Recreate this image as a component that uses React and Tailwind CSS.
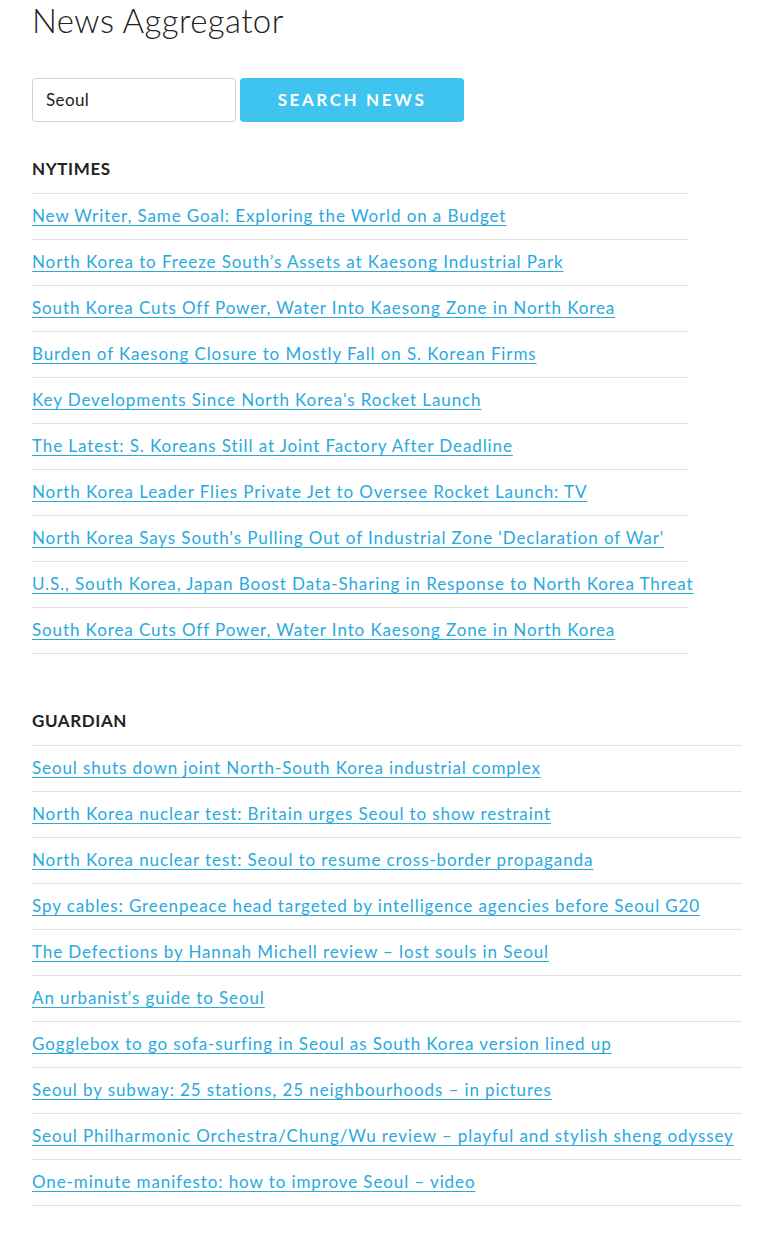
import React from "react";

const nytimes = [
  "New Writer, Same Goal: Exploring the World on a Budget",
  "North Korea to Freeze South\u2019s Assets at Kaesong Industrial Park",
  "South Korea Cuts Off Power, Water Into Kaesong Zone in North Korea",
  "Burden of Kaesong Closure to Mostly Fall on S. Korean Firms",
  "Key Developments Since North Korea's Rocket Launch",
  "The Latest: S. Koreans Still at Joint Factory After Deadline",
  "North Korea Leader Flies Private Jet to Oversee Rocket Launch: TV",
  "North Korea Says South's Pulling Out of Industrial Zone 'Declaration of War'",
  "U.S., South Korea, Japan Boost Data-Sharing in Response to North Korea Threat",
  "South Korea Cuts Off Power, Water Into Kaesong Zone in North Korea",
];

const guardian = [
  "Seoul shuts down joint North-South Korea industrial complex",
  "North Korea nuclear test: Britain urges Seoul to show restraint",
  "North Korea nuclear test: Seoul to resume cross-border propaganda",
  "Spy cables: Greenpeace head targeted by intelligence agencies before Seoul G20",
  "The Defections by Hannah Michell review \u2013 lost souls in Seoul",
  "An urbanist's guide to Seoul",
  "Gogglebox to go sofa-surfing in Seoul as South Korea version lined up",
  "Seoul by subway: 25 stations, 25 neighbourhoods \u2013 in pictures",
  "Seoul Philharmonic Orchestra/Chung/Wu review \u2013 playful and stylish sheng odyssey",
  "One-minute manifesto: how to improve Seoul \u2013 video",
];

function Section({ title, items, width }) {
  return (
    <div className={width}>
      <div className="h-[47px] flex items-center pb-[2px] border-b border-[#e1e1e1] text-[17px] font-bold text-[#222] tracking-[0.6px]">
        {title}
      </div>
      {items.map((t, i) => (
        <div
          key={i}
          className="h-[46px] flex items-center pb-[2px] border-b border-[#e1e1e1] whitespace-nowrap"
        >
          <a
            href="#"
            className="text-[17px] text-[#2aa9dd] tracking-[0.9px] underline underline-offset-[3px] decoration-1"
          >
            {t}
          </a>
        </div>
      ))}
    </div>
  );
}

export default function App() {
  return (
    <div
      className="bg-white min-h-[1236px] pl-8 text-[#222]"
      style={{ fontFamily: "Lato, 'Open Sans', sans-serif" }}
    >
      <h1 className="text-[33px] font-light leading-[40px] tracking-[0.4px] text-[#222] pt-0">
        News Aggregator
      </h1>
      <div className="flex gap-1 mt-[38px]">
        <div className="w-[204px] h-[44px] border border-[#d1d1d1] rounded-[4px] flex items-center px-[13px] text-[17px] tracking-[0.4px] text-[#222]">
          Seoul
        </div>
        <button className="w-[224px] h-[44px] rounded-[4px] bg-[#3fc4ef] text-white text-[17px] font-bold tracking-[2.6px] uppercase">
          Search News
        </button>
      </div>
      <div className="mt-[25px]">
        <Section title="NYTIMES" items={nytimes} width="w-[656px]" />
      </div>
      <div className="mt-[45px]">
        <Section title="GUARDIAN" items={guardian} width="w-[710px]" />
      </div>
    </div>
  );
}
